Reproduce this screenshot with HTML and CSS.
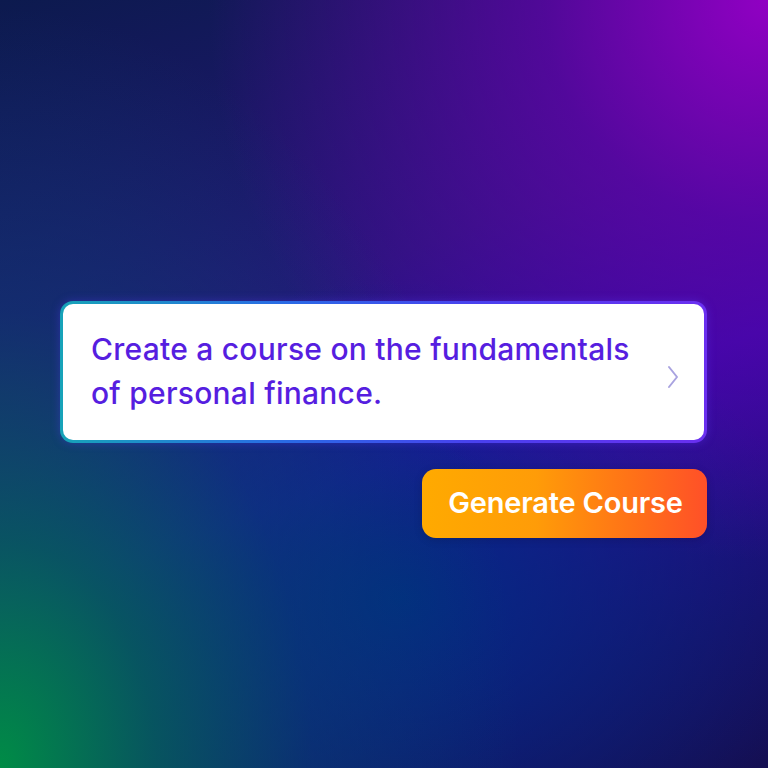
FILE: index.html
```html
<!DOCTYPE html>
<html>
<head>
<meta charset="utf-8">
<link rel="stylesheet" href="styles.css">
</head>
<body>
<main class="stage">
  <div class="prompt-card">
    <p class="prompt-text">Create a course on the fundamentals<br>of personal finance.</p>
    <svg class="chevron" width="14" height="24" viewBox="0 0 14 24"><path d="M3 2 L11 12 L3 22" fill="none" stroke="#a9a3e0" stroke-width="2" stroke-linecap="round" stroke-linejoin="round"/></svg>
  </div>
  <button class="generate-btn">Generate Course</button>
</main>
</body>
</html>
```

FILE: styles.css
```css
html, body {
  margin: 0;
  padding: 0;
}
body {
  width: 768px;
  height: 768px;
  overflow: hidden;
  font-family: Inter, "Noto Sans", sans-serif;
}
.stage {
  box-sizing: border-box;
  width: 768px;
  height: 768px;
  padding: 301px 61px 0 60px;
  display: flex;
  flex-direction: column;
  align-items: stretch;
  background:
    radial-gradient(ellipse 520px 760px at 0% 100%, rgba(0,140,70,1) 0%, rgba(4,95,90,0.85) 30%, rgba(5,70,110,0.45) 60%, rgba(5,50,120,0) 100%),
    radial-gradient(ellipse 560px 560px at 100% 0%, rgba(145,0,195,1) 0%, rgba(110,0,180,0.65) 40%, rgba(80,0,170,0) 100%),
    radial-gradient(ellipse 420px 320px at 52% 78%, rgba(0,45,130,0.95) 0%, rgba(0,40,130,0) 100%),
    linear-gradient(160deg, #0c1a4e 0%, #241678 38%, #2c0aa2 58%, #18106c 85%, #140f52 100%);
}
.prompt-card {
  box-sizing: border-box;
  height: 142px;
  border: 3px solid transparent;
  border-radius: 13px;
  background:
    linear-gradient(#fff, #fff) padding-box,
    linear-gradient(90deg, #17a3b8 0%, #2a6ae6 35%, #4a40ee 65%, #6a2ff0 100%) border-box;
  box-shadow: 0 0 10px rgba(90,60,255,0.35);
  display: flex;
  align-items: center;
  padding: 0 24px 0 28px;
}
.prompt-text {
  flex: 1;
  margin: 0;
  font-size: 30px;
  font-weight: 500;
  line-height: 44px;
  color: #561ee0;
  letter-spacing: 0.25px;
  padding-bottom: 2px;
}
.chevron {
  flex: none;
  margin-top: 10px;
}
.generate-btn {
  align-self: flex-end;
  margin-top: 26px;
  width: 285px;
  height: 69px;
  border: none;
  border-radius: 14px;
  background: linear-gradient(90deg, #ffaa00 0%, #ff9c08 40%, #ff7018 75%, #ff5028 100%);
  color: #fff;
  font-family: Inter, "Noto Sans", sans-serif;
  font-size: 29px;
  font-weight: 600;
  letter-spacing: -0.2px;
  padding: 0 0 2px 2px;
  box-shadow: 0 2px 8px rgba(0,0,0,0.15);
}
```
